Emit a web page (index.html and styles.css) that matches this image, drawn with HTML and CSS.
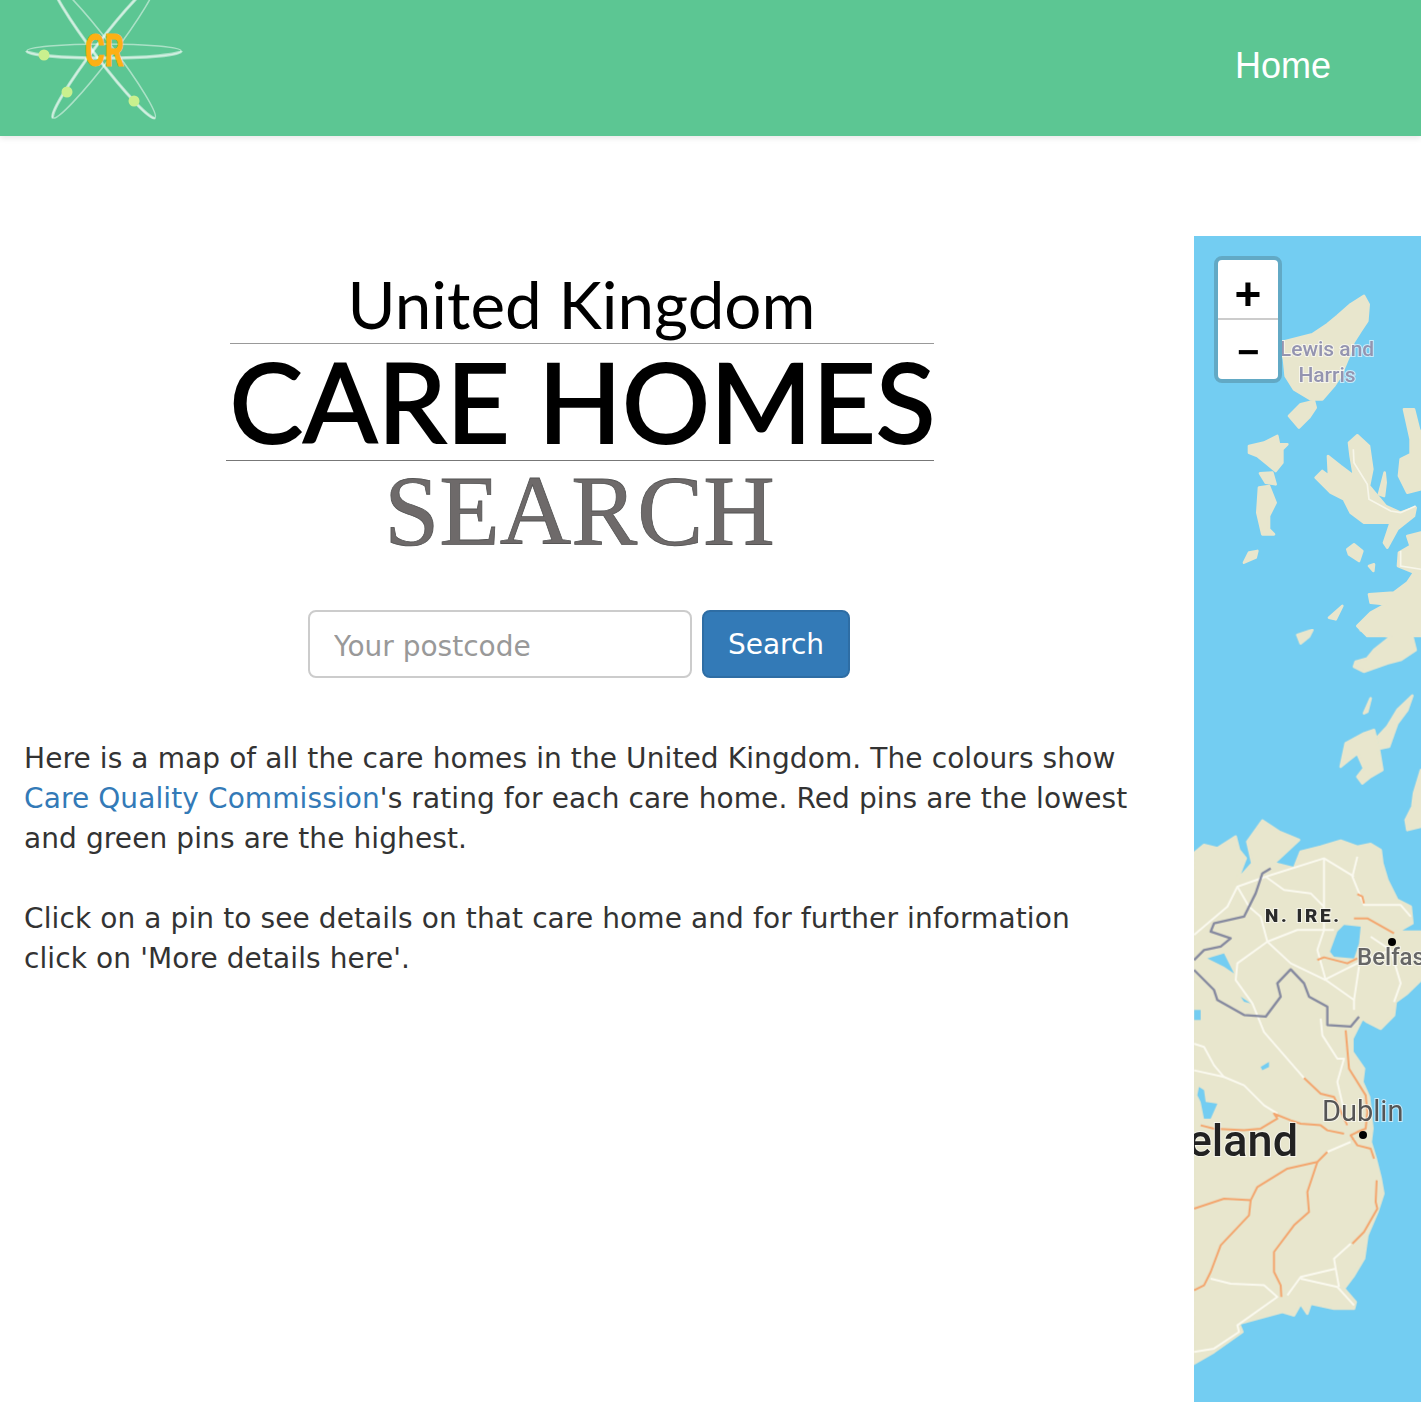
FILE: index.html
```html
<!DOCTYPE html>
<html lang="en">
<head>
    <meta charset="UTF-8">
    <title>United Kingdom Care Homes Search</title>
    <link rel="stylesheet" href="styles.css">
</head>
<body>
    <header class="navbar">
        <svg class="brand" width="210" height="136" viewBox="0 0 210 136">
            <g fill="none" stroke="#fff" stroke-opacity=".48" stroke-width="1.6">
                <ellipse cx="104" cy="51" rx="77" ry="7"/>
                <ellipse cx="104" cy="51" rx="84" ry="9" transform="rotate(52.7 104 51)"/>
                <ellipse cx="104" cy="51" rx="84" ry="9" transform="rotate(-52.7 104 51)"/>
                <path d="M27 51a77 7 0 0 0 154 0" stroke-width="3.6"/>
                <path d="M20 51a84 9 0 0 0 168 0" stroke-width="3.2" transform="rotate(52.7 104 51)"/>
                <path d="M20 51a84 9 0 0 1 168 0" stroke-width="3.2" transform="rotate(-52.7 104 51)"/>
            </g>
            <g fill="#c9f08e">
                <circle cx="44" cy="55" r="5.5"/>
                <circle cx="67" cy="92" r="5.5"/>
                <circle cx="134" cy="101" r="5.5"/>
            </g>
            <text class="brand-text" x="85" y="66" textLength="39" lengthAdjust="spacingAndGlyphs">CR</text>
        </svg>
        <a class="nav-link" href="#">Home</a>
    </header>

    <main class="content">
        <section class="intro">
            <div class="title">
                <div class="title-top">United Kingdom</div>
                <div class="title-main">CARE HOMES</div>
                <div class="title-sub">SEARCH</div>
            </div>

            <form class="search">
                <input class="search-input" type="text" placeholder="Your postcode">
                <button class="search-button" type="button">Search</button>
            </form>

            <p>Here is a map of all the care homes in the United Kingdom. The colours show <a href="#">Care Quality Commission</a>'s rating for each care home. Red pins are the lowest and green pins are the highest.</p>
            <p>Click on a pin to see details on that care home and for further information click on 'More details here'.</p>
        </section>

        <section class="map">
            <svg class="map-canvas" width="227" height="1166" viewBox="0 0 227 1166">
                <rect width="227" height="1166" fill="#73cdf2"/>
                <g class="blurred">
                    <!-- scotland -->
                    <g class="land" transform="scale(.3333)">
                        <path d="M510 180L524 205 520 255 500 285 478 320 465 360 440 420 420 450 385 490 350 490 300 460 275 420 270 370 258 320 355 295 400 265 430 240 470 205Z"/>
                        <path d="M285 540L320 505 360 495 365 515 345 545 315 575Z"/>
                        <path d="M165 630L210 620 250 600 255 625 280 625 265 640 265 680 245 705 215 680 190 660 165 650Z"/>
                        <path d="M198 712L235 710 245 745 215 740Z"/>
                        <path d="M195 755L225 750 245 800 225 840 225 880 240 895 205 895 190 830Z"/>
                        <path d="M150 980L165 950 190 945 185 965Z"/>
                        <path d="M465 620L490 598 525 630 535 700 525 750 575 810 620 830 665 815 660 840 610 880 580 935 570 920 590 860 550 860 510 860 470 830 450 790 410 770 365 725 385 705 405 720 402 660 440 690 480 720 470 660Z"/>
                        <path d="M555 775L572 710 575 740 570 780Z"/>
                        <path d="M630 520L660 520 675 580 681 590 681 760 640 770 615 720 620 670 650 655 650 610Z"/>
                        <path d="M681 890L640 900 650 930 615 950 612 990 660 1010 640 1040 600 1070 525 1075 530 1100 575 1105 530 1130 490 1170 520 1200 681 1200Z"/>
                        <path d="M460 940L480 925 505 945 495 975 465 955Z"/>
                        <path d="M525 990L540 985 538 1005Z"/>
                        <path d="M405 1145L445 1110 425 1150Z"/>
                    </g>
                    <g transform="scale(.3333)" fill="none" stroke="#f7f6ea" stroke-width="5">
                        <path d="M478 640L480 680 520 745 525 790 590 825 620 830 665 810"/>
                        <path d="M620 945L620 990 681 1000"/>
                    </g>
                    <g transform="translate(0 394) scale(.3333)">
                        <g class="land">
                            <path d="M310 15L355 0 345 20 320 40Z"/>
                            <path d="M500 0L650 0 665 60 620 90 580 100 510 125 480 110 485 95 520 85 540 60 590 20 520 5Z"/>
                            <path d="M655 197L640 240 610 280 585 350 560 355 552 320 580 290 610 240Z"/>
                            <path d="M440 410L455 340 510 310 540 300 555 360 565 420 530 440 505 460 490 440 510 415 490 370 465 390Z"/>
                            <path d="M510 250L530 205 520 245Z"/>
                            <path d="M681 420L660 490 655 530 635 570 640 600 681 590Z"/>
                            <path d="M0 670L30 645 70 655 125 620 135 660 155 685 130 750 175 700 160 635 205 572 255 605 315 630 240 700 300 715 320 665 380 650 440 632 490 650 530 642 560 660 565 700 580 750 610 810 650 830 655 880 610 905 681 905 681 1050 640 1090 605 1116 600 1156 560 1196 520 1176 505 1166 475 1226 475 1266 510 1316 505 1356 525 1401 535 1496 530 1536 545 1586 560 1646 568 1691 550 1746 520 1816 510 1886 480 1936 450 1976 485 2016 480 2036 420 2036 350 2021 340 2051 320 2021 300 2056 265 2046 135 2081 145 2106 60 2166 0 2201Z"/>
                        </g>
                        <g fill="#73cdf2">
                            <path d="M430 905L450 885 500 890 495 940 480 985 420 980 408 965Z"/>
                            <path d="M40 985L90 970 120 1030 90 1010Z"/>
                            <path d="M140 1100L170 1120 150 1115Z"/>
                            <path d="M0 1140H20V1170H0Z"/>
                            <path d="M200 1311L225 1296 225 1311 205 1321Z"/>
                            <path d="M15 1371L30 1381 35 1416 70 1421 50 1466 30 1466 20 1416 10 1396Z"/>
                        </g>
                        <g class="roads">
                            <path d="M215 740L390 685 480 740"/>
                            <path d="M390 685L390 900 370 960 395 1050"/>
                            <path d="M215 740L130 770 100 830 0 915"/>
                            <path d="M130 770L165 830 200 860 220 935 130 1000 125 1050 175 1120 210 1206 330 1344"/>
                            <path d="M220 935L290 1000 395 1050 480 1110 480 1140"/>
                            <path d="M220 935L310 900 420 900"/>
                            <path d="M215 740L270 780 350 790 390 830"/>
                            <path d="M490 680L475 740 510 825 620 825 650 860"/>
                            <path d="M390 1050L490 1000 590 960 530 920"/>
                            <path d="M495 1010L480 1110"/>
                            <path d="M590 960L620 1060 600 1116"/>
                            <path d="M0 1241L30 1251 60 1306 90 1341 150 1366 210 1426 250 1451"/>
                            <path d="M0 1321L90 1341"/>
                            <path d="M380 1166L385 1216 430 1286 450 1286 430 1356 460 1486"/>
                            <path d="M470 1841L420 1886 425 1916 320 1941 280 1996"/>
                            <path d="M320 1946L430 1971 480 2026"/>
                            <path d="M425 1916L435 1971"/>
                            <path d="M50 1946L110 1961 210 1966 250 2001 130 2086 135 2106 60 2156 0 2166"/>
                            <path d="M400 1566L470 1536"/>
                        </g>
                        <g class="motorways">
                            <path d="M490 792L505 800 510 820"/>
                            <path d="M480 865L520 865 600 910"/>
                            <path d="M370 990L390 982 460 1000 490 985"/>
                            <path d="M455 1201L465 1316 515 1396 520 1446 515 1496 490 1506 470 1516 490 1546 530 1556 540 1586"/>
                            <path d="M330 1344L380 1391 420 1401 460 1486"/>
                            <path d="M20 1486L60 1496 150 1501 200 1496 250 1466 240 1451 290 1471 320 1481 380 1486 400 1501 450 1511"/>
                            <path d="M400 1566L370 1596 280 1616 190 1671 170 1711 90 1706 0 1736"/>
                            <path d="M170 1711L165 1756 80 1846 50 1926 30 1966 0 1981"/>
                            <path d="M370 1596L340 1686 345 1746 300 1786 240 1866 240 1926 260 1966 262 2001"/>
                            <path d="M548 1651L545 1716 550 1736 510 1806 475 1841"/>
                        </g>
                        <g class="border">
                            <path d="M230 715L205 730 185 790 150 860 60 880 50 905 110 925 80 950 30 960 0 990"/>
                            <path d="M0 1020L60 1080 70 1110 150 1155 215 1160 260 1100 250 1060 290 1018 330 1060 345 1100 400 1130 400 1185 470 1190 495 1160"/>
                        </g>
                    </g>
                </g>
                <circle cx="198" cy="706" r="4" fill="#000"/>
                <circle cx="169" cy="899" r="4" fill="#000"/>
                <text class="label label-small" x="133" y="120" text-anchor="middle">Lewis and</text>
                <text class="label label-small" x="133" y="146" text-anchor="middle">Harris</text>
                <text class="label label-region" x="71" y="686">N. IRE.</text>
                <text class="label label-town" x="163" y="729">Belfast</text>
                <text class="label label-city" x="128" y="885">Dublin</text>
                <text class="label label-country" x="104" y="920" text-anchor="end">Ireland</text>
            </svg>
            <div class="zoom-control">
                <a class="zoom-in" href="#">+</a>
                <a class="zoom-out" href="#">−</a>
            </div>
        </section>
    </main>
</body>
</html>
```

FILE: styles.css
```css
html, body {
    margin: 0;
    height: 1402px;
    overflow: hidden;
}

body {
    font-family: "DejaVu Sans", sans-serif;
    font-size: 28px;
    line-height: 40px;
    color: #333;
    background: #fff;
}

.navbar {
    display: flex;
    justify-content: space-between;
    align-items: center;
    height: 136px;
    background: #5cc693;
    box-shadow: 0 2px 6px rgba(0, 0, 0, 0.1);
}

.brand {
    display: block;
}

.brand-text {
    font-family: Roboto, sans-serif;
    font-weight: 700;
    font-size: 45px;
    fill: #fdb014;
    stroke: #fdb014;
    stroke-width: 1px;
}

.nav-link {
    margin-right: 90px;
    padding-bottom: 4px;
    font-family: "Liberation Sans", sans-serif;
    font-size: 36px;
    color: #fff;
    text-decoration: none;
}

.content {
    display: flex;
    justify-content: space-between;
    margin-top: 100px;
}

.intro {
    width: 1158px;
    padding: 34px 24px 0;
    box-sizing: border-box;
}

.intro p {
    margin: 0 0 40px;
    letter-spacing: 0.1px;
}

.intro a {
    color: #337ab7;
    text-decoration: none;
}

.title {
    width: 708px;
    margin: 0 auto;
    padding-left: 1px;
    text-align: center;
    color: #000;
}

.title-top {
    height: 73px;
    margin-left: 4px;
    font-family: Lato, sans-serif;
    font-size: 65.5px;
    line-height: 68px;
    border-bottom: 1px solid #999;
}

.title-main {
    height: 116px;
    font-family: Lato, sans-serif;
    font-size: 110px;
    line-height: 112px;
    text-indent: 4px;
    white-space: nowrap;
    -webkit-text-stroke: 2px #000;
    border-bottom: 1px solid #777;
}

.title-sub {
    height: 100px;
    font-family: "Liberation Serif", serif;
    font-size: 99px;
    line-height: 100px;
    color: #6e6a6a;
    -webkit-text-stroke: 0.8px #555;
}

.search {
    display: flex;
    justify-content: center;
    gap: 10px;
    margin: 49px 0 61px;
}

.search-input {
    width: 384px;
    height: 68px;
    padding: 4px 24px 0;
    box-sizing: border-box;
    font-family: "DejaVu Sans", sans-serif;
    font-size: 28px;
    color: #555;
    border: 2px solid #ccc;
    border-radius: 8px;
    outline: none;
}

.search-input::placeholder {
    color: #999;
    opacity: 1;
}

.search-button {
    width: 148px;
    height: 68px;
    padding: 0;
    font-family: "DejaVu Sans", sans-serif;
    font-size: 28px;
    color: #fff;
    background: #337ab7;
    border: 2px solid #2e6da4;
    border-radius: 8px;
}

.map {
    position: relative;
    width: 227px;
    height: 1166px;
    overflow: hidden;
}

.map-canvas {
    display: block;
}

.blurred {
    filter: blur(0.7px);
}

.land {
    fill: #e8e6cd;
    stroke: #e8e6cd;
    stroke-width: 8px;
    stroke-linejoin: round;
}

.roads,
.motorways,
.border {
    fill: none;
    stroke-width: 6px;
    stroke-linejoin: round;
}

.roads {
    stroke: #fbfaf0;
}

.motorways {
    stroke: #f4a66e;
}

.border {
    stroke: #85899f;
    stroke-width: 7px;
}

.label {
    font-family: Roboto, sans-serif;
    paint-order: stroke;
    stroke: rgba(255, 255, 255, 0.6);
    stroke-width: 2px;
}

.label-small {
    font-size: 21px;
    font-weight: 500;
    fill: #9494b0;
}

.label-region {
    font-size: 19px;
    font-weight: 900;
    letter-spacing: 2.6px;
    fill: #2b2b2b;
}

.label-town {
    font-size: 24px;
    font-weight: 500;
    fill: #666;
}

.label-city {
    font-size: 29px;
    fill: #555;
}

.label-country {
    font-size: 45px;
    font-weight: 500;
    fill: #222;
}

.zoom-control {
    position: absolute;
    left: 20px;
    top: 20px;
    width: 60px;
    height: 119px;
    border: 4px solid #62a9c5;
    border-radius: 8px;
    overflow: hidden;
    background: #fff;
}

.zoom-control a {
    display: flex;
    justify-content: center;
    align-items: center;
    box-sizing: border-box;
    height: 59px;
    font-family: "Liberation Sans", sans-serif;
    font-size: 46px;
    font-weight: 700;
    line-height: 1;
    color: #000;
    text-decoration: none;
}

.zoom-control .zoom-in {
    height: 60px;
    padding-top: 9px;
    border-bottom: 2px solid #ccc;
}

.zoom-control .zoom-out {
    padding-top: 4px;
    font-size: 38px;
}
```
